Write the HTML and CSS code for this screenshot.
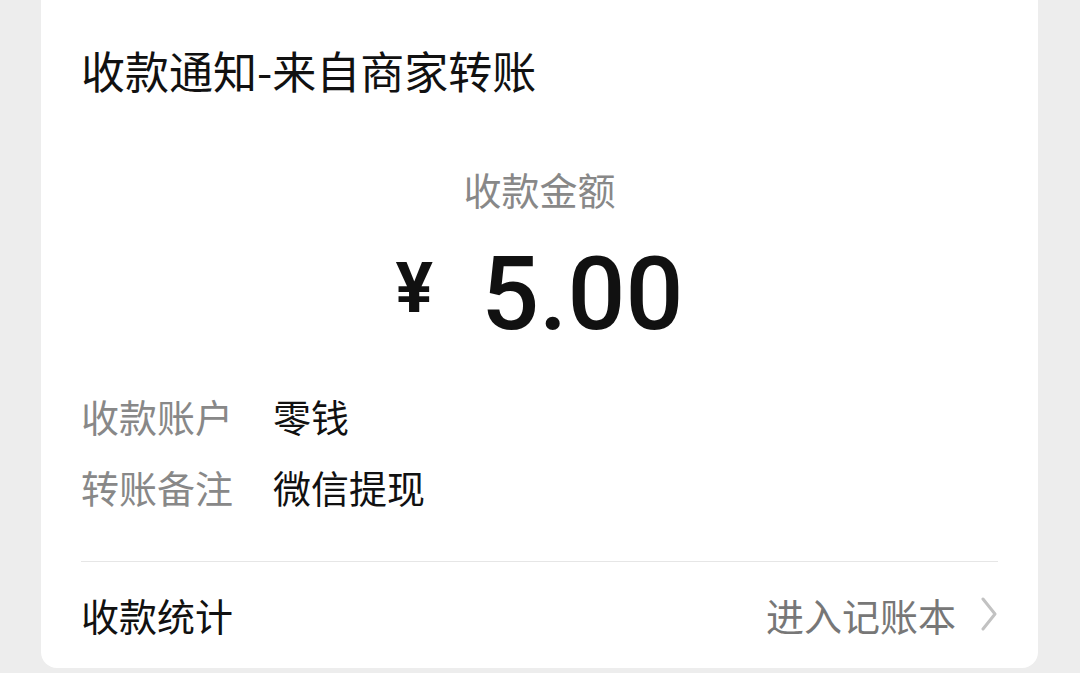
FILE: index.html
```html
<!DOCTYPE html>
<html lang="zh-CN">
<head>
    <meta charset="UTF-8">
    <meta name="viewport" content="width=device-width, initial-scale=1.0">
    <title>收款通知</title>
    <link rel="stylesheet" href="styles.css">
</head>
<body>

<div class="page">
    <div class="card">
        <h1 class="title">收款通知-来自商家转账</h1>

        <div class="amount-label">收款金额</div>
        <div class="amount">
            <span class="currency">¥</span>
            <span class="value">5.00</span>
        </div>

        <div class="details">
            <div class="row">
                <span class="row-label">收款账户</span>
                <span class="row-value">零钱</span>
            </div>
            <div class="row">
                <span class="row-label">转账备注</span>
                <span class="row-value">微信提现</span>
            </div>
        </div>

        <div class="footer">
            <span class="footer-title">收款统计</span>
            <span class="footer-link">
                进入记账本
                <svg class="chevron" width="18" height="34" viewBox="0 0 18 34">
                    <path d="M3 2 L15 17 L3 32" fill="none" stroke="#c2c2c2" stroke-width="3" stroke-linecap="round" stroke-linejoin="round"/>
                </svg>
            </span>
        </div>
    </div>
</div>

</body>
</html>
```

FILE: styles.css
```css
body {
    margin: 0;
    background-color: #ededed;
    font-family: "Noto Sans CJK SC", "Noto Sans", sans-serif;
    color: #111;
}
.page {
    padding: 0 42px 5px 41px;
}
.card {
    background: #fff;
    border-radius: 0 0 16px 16px;
    padding: 40px 40px 24px;
}
.title {
    margin: 0;
    font-size: 44px;
    font-weight: 400;
    line-height: 60px;
    color: #111;
}
.amount-label {
    margin-top: 64px;
    text-align: center;
    font-size: 38px;
    line-height: 50px;
    color: #888;
}
.amount {
    margin-top: 20px;
    height: 120px;
    display: flex;
    align-items: center;
    justify-content: center;
    gap: 48px;
}
.currency {
    font-family: Roboto, "Noto Sans", sans-serif;
    font-size: 70px;
    font-weight: 700;
    margin-top: -12px;
}
.value {
    font-family: Roboto, "Noto Sans", sans-serif;
    font-size: 102px;
    font-weight: 500;
    line-height: 120px;
}
.details {
    margin-top: 26px;
}
.row {
    display: flex;
    align-items: center;
    height: 71px;
    font-size: 38px;
}
.row-label {
    width: 192px;
    color: #888;
}
.row-value {
    color: #111;
}
.footer {
    margin-top: 39px;
    border-top: 1px solid #e6e6e6;
    padding-top: 22px;
    display: flex;
    justify-content: space-between;
    align-items: center;
    height: 60px;
    font-size: 38px;
}
.footer-link {
    display: flex;
    align-items: center;
    gap: 24px;
    color: #777;
}
```
